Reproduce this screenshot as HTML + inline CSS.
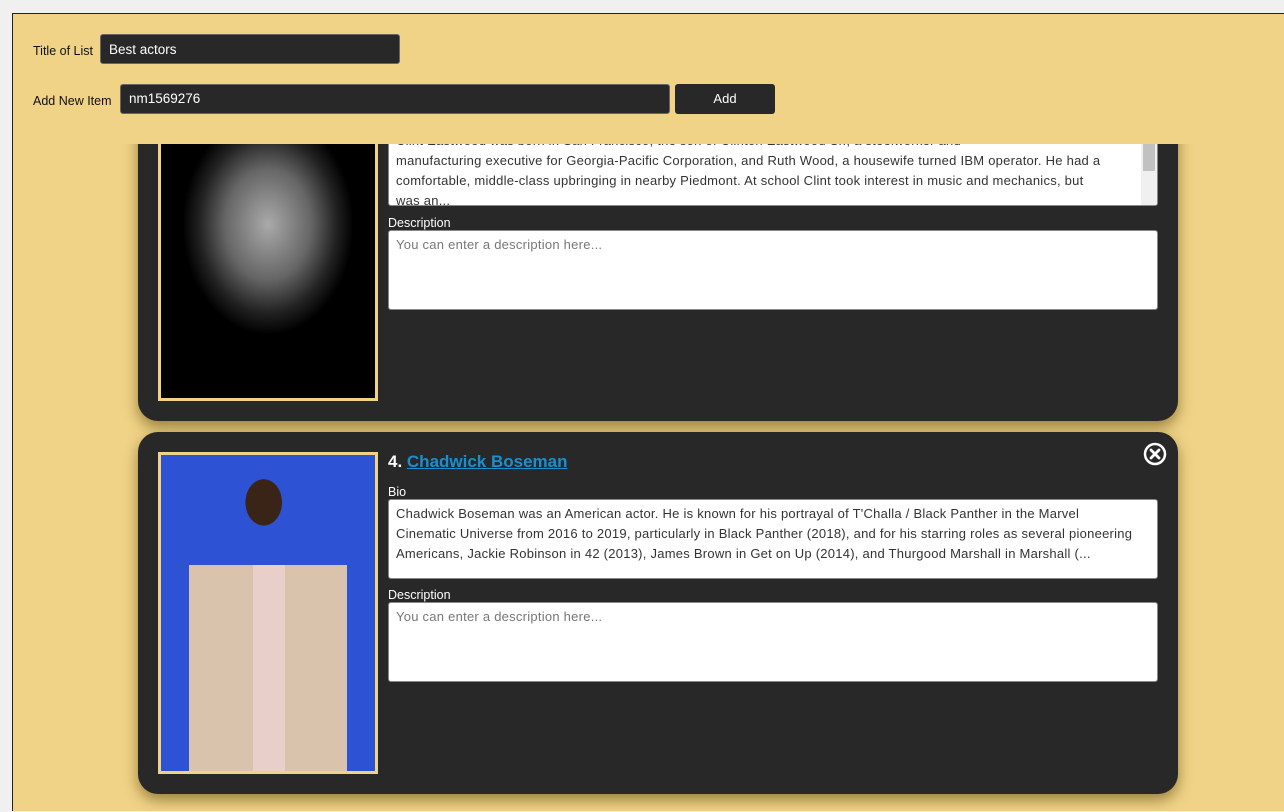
<!DOCTYPE html>
<html><head><style>
*{box-sizing:border-box}
body{margin:0;width:1284px;height:812px;background:#f0f0f0;font-family:"Liberation Sans",sans-serif;overflow:hidden;position:relative}
#frame{position:absolute;left:12px;top:13px;width:1272px;height:798px;background:#f0d386;border-left:1px solid #222;border-top:1px solid #222;overflow:hidden}
#hdr{position:absolute;left:0;top:0;width:1272px;height:130px;background:#f0d386;z-index:5}
.lbl{position:absolute;font-size:12.5px;color:#111}
.inp{position:absolute;background:#282828;border:1px solid #666;border-radius:3px;color:#fff;font-size:13.5px;padding:6px 8px}
.btn{position:absolute;background:#282828;border-radius:3px;color:#fff;font-size:13px;text-align:center;line-height:30px}
.card{position:absolute;left:125px;width:1040px;background:#282828;border-radius:20px;box-shadow:0 6px 14px rgba(80,60,0,.55)}
.img{position:absolute;left:20px;width:220px;height:322px;border:3px solid #f0d386}
.title{position:absolute;left:250px;font-weight:bold;color:#fff;font-size:17px}
.title a{color:#1a8fd0;text-decoration:underline}
.fl{position:absolute;left:250px;color:#fff;font-size:12.5px}
.ta{position:absolute;left:250px;width:770px;height:80px;background:#fff;border:1px solid #888;border-radius:3px;padding:4px 7px;font-size:13px;line-height:20px;color:#333;white-space:nowrap;overflow:hidden;letter-spacing:0.25px}
.ph{color:#777}
.x{position:absolute;right:11px;top:10px}
.sb{position:absolute;right:0;top:0;width:16px;height:78px;background:#f0f0f0}
.sb div{position:absolute;left:2px;top:14px;width:12px;height:30px;background:#c1c1c1}
</style></head><body>
<div id="frame">
<div id="hdr">
<div class="lbl" style="left:20px;top:30px">Title of List</div>
<div class="inp" style="left:87px;top:20px;width:300px;height:30px;padding-top:7px">Best actors</div>
<div class="lbl" style="left:20px;top:80px">Add New Item</div>
<div class="inp" style="left:107px;top:70px;width:550px;height:30px;padding-top:6px">nm1569276</div>
<div class="btn" style="left:662px;top:70px;width:100px;height:30px">Add</div>
</div>
<div class="card" style="top:45px;height:362px">
<div class="img" style="top:20px;background:radial-gradient(ellipse 40% 35% at 50% 45%,#aaa,#666 50%,#222 80%,#000),#000"></div>
<div class="ta" style="top:67px;padding-right:20px">Clint Eastwood was born in San Francisco, the son of Clinton Eastwood Sr., a steelworker and<br>manufacturing executive for Georgia-Pacific Corporation, and Ruth Wood, a housewife turned IBM operator. He had a<br>comfortable, middle-class upbringing in nearby Piedmont. At school Clint took interest in music and mechanics, but<br>was an...<div class="sb"><div></div></div></div>
<div class="fl" style="top:157px">Description</div>
<div class="ta ph" style="top:171px">You can enter a description here...</div>
</div>
<div class="card" style="top:418px;height:362px">
<div class="img" style="top:20px;background:radial-gradient(ellipse 14% 12% at 48% 15%,#3a2417 60%,transparent 62%),linear-gradient(90deg,transparent 13%,#d9c3ac 13%,#d9c3ac 43%,#e8cfc9 43%,#e8cfc9 58%,#d9c3ac 58%,#d9c3ac 87%,transparent 87%) 0 110px/100% 100% no-repeat,#2d53d4"></div>
<div class="title" style="top:20px">4. <a>Chadwick Boseman</a></div>
<svg class="x" width="24" height="24" viewBox="0 0 24 24"><circle cx="12" cy="12" r="10" fill="none" stroke="#fff" stroke-width="2.5"/><path d="M8 8L16 16M16 8L8 16" stroke="#fff" stroke-width="2.8" stroke-linecap="round"/></svg>
<div class="fl" style="top:53px">Bio</div>
<div class="ta" style="top:67px">Chadwick Boseman was an American actor. He is known for his portrayal of T'Challa / Black Panther in the Marvel<br>Cinematic Universe from 2016 to 2019, particularly in Black Panther (2018), and for his starring roles as several pioneering<br>Americans, Jackie Robinson in 42 (2013), James Brown in Get on Up (2014), and Thurgood Marshall in Marshall (...</div>
<div class="fl" style="top:156px">Description</div>
<div class="ta ph" style="top:170px">You can enter a description here...</div>
</div>
</div>
</body></html>
